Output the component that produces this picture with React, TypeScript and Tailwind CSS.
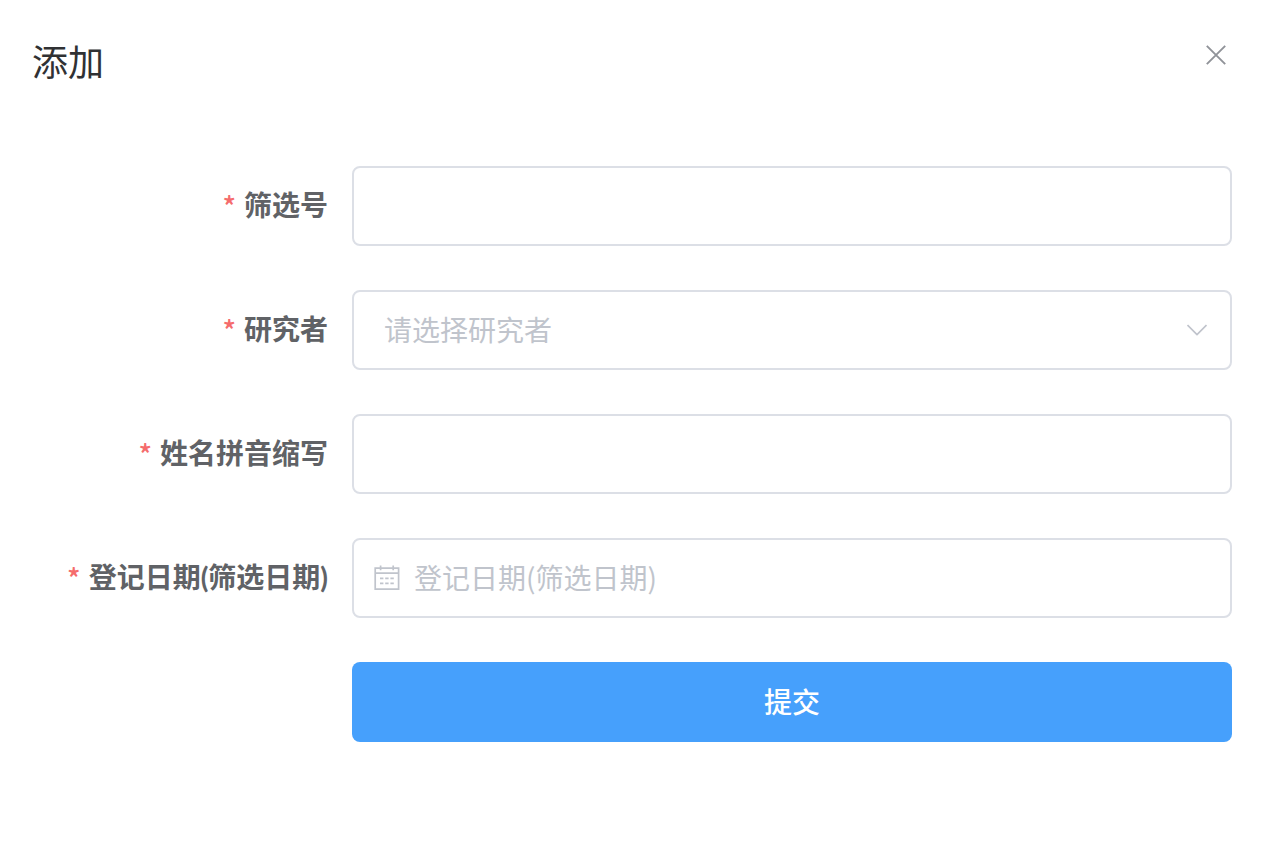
import { useState } from 'react';
import type { FormEvent, ReactNode } from 'react';

interface FormRowProps {
  id: string;
  label: string;
  children: ReactNode;
}

const fieldClass =
  'block h-20 w-full rounded-lg border-2 border-[#dcdfe6] bg-white pb-0.5 text-[28px] text-[#606266] placeholder:text-[#c0c4cc] placeholder:opacity-100 outline-none focus:border-[#409eff]';

function CloseIcon() {
  return (
    <svg className="size-5" viewBox="0 0 20 20" fill="none" stroke="currentColor" strokeWidth="1.9" aria-hidden="true">
      <path d="M0.8 0.8 19.2 19.2M19.2 0.8 0.8 19.2" />
    </svg>
  );
}

function ChevronIcon() {
  return (
    <svg className="h-3 w-5" viewBox="0 0 20 12" fill="none" stroke="currentColor" strokeWidth="1.7" aria-hidden="true">
      <path d="M0.5 1 10 10.6 19.5 1" strokeLinejoin="round" />
    </svg>
  );
}

function CalendarIcon() {
  return (
    <svg className="size-[26px]" viewBox="0 0 26 26" fill="none" stroke="currentColor" strokeWidth="1.7" aria-hidden="true">
      <path d="M1.2 3.2h23.4v21H1.2zM1.2 8.2h23.4M6.6 0.6v4.6M19.2 0.6v4.6" />
      <path d="M6 13.4h3.4M11.2 13.4h3.4M16.4 13.4h3.4M6 18.4h3.4M11.2 18.4h3.4M16.4 18.4h3.4" />
    </svg>
  );
}

function FormRow({ id, label, children }: FormRowProps) {
  return (
    <div className="flex items-center gap-6">
      <label htmlFor={id} className="flex w-[296px] shrink-0 justify-end gap-2 pb-0.5 text-[28px] leading-10 font-bold whitespace-nowrap text-[#606266]">
        <span className="font-medium text-[#f56c6c]">*</span>
        <span className="font-['Lato','Noto_Sans_CJK_SC',sans-serif]">{label}</span>
      </label>
      <div className="relative min-w-0 flex-1">{children}</div>
    </div>
  );
}

export default function App() {
  const [investigator, setInvestigator] = useState('');

  const handleSubmit = (e: FormEvent) => {
    e.preventDefault();
  };

  return (
    <div className="min-h-screen bg-white pr-[30px] pb-24 pl-8 font-['Noto_Sans_CJK_SC',sans-serif]">
      {/* Header */}
      <header className="flex items-start justify-between pt-[34px]">
        <h1 className="text-4xl leading-[52px] text-[#303133]">添加</h1>
        <button type="button" aria-label="关闭" className="mt-[5px] flex size-8 items-center justify-center text-[#909399] hover:text-[#409eff]">
          <CloseIcon />
        </button>
      </header>

      {/* Form */}
      <form onSubmit={handleSubmit} className="mt-20 flex flex-col gap-11">
        <FormRow id="screeningNo" label="筛选号">
          <input id="screeningNo" type="text" className={`${fieldClass} px-[30px]`} />
        </FormRow>

        <FormRow id="investigator" label="研究者">
          <select
            id="investigator"
            value={investigator}
            onChange={(e) => setInvestigator(e.target.value)}
            className={`${fieldClass} appearance-none px-[30px] invalid:text-[#c0c4cc]`}
            required
          >
            <option value="" disabled>
              请选择研究者
            </option>
          </select>
          <span className="pointer-events-none absolute inset-y-0 right-[25px] flex items-center text-[#c0c4cc]">
            <ChevronIcon />
          </span>
        </FormRow>

        <FormRow id="initials" label="姓名拼音缩写">
          <input id="initials" type="text" className={`${fieldClass} px-[30px]`} />
        </FormRow>

        <FormRow id="registerDate" label="登记日期(筛选日期)">
          <input id="registerDate" type="text" placeholder="登记日期(筛选日期)" className={`${fieldClass} pr-[30px] pl-[60px]`} />
          <span className="pointer-events-none absolute inset-y-0 left-[22px] flex items-center text-[#c0c4cc]">
            <CalendarIcon />
          </span>
        </FormRow>

        <button type="submit" className="ml-80 h-20 rounded-lg bg-[#46a0fc] pb-0.5 text-[28px] font-medium text-white hover:bg-[#66b1ff]">
          提交
        </button>
      </form>
    </div>
  );
}
